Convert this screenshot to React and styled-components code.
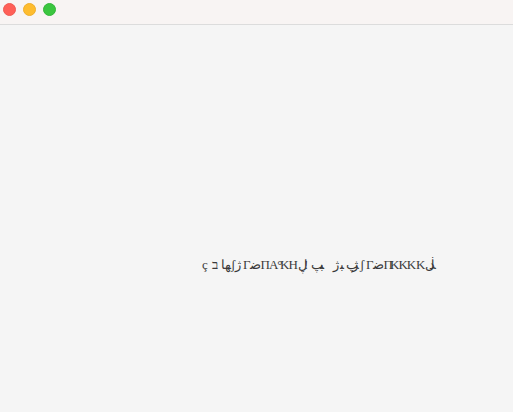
import React from 'react';
import styled, { createGlobalStyle } from 'styled-components';

const Global = createGlobalStyle`
  html, body { margin: 0; padding: 0; height: 100%; background: #f5f5f5; }
  #root { height: 100%; }
`;

const Window = styled.div`
  height: 412px;
  display: flex;
  flex-direction: column;
  background: #f5f5f5;
  overflow: hidden;
`;

const TitleBar = styled.div`
  height: 25px;
  display: flex;
  align-items: center;
  gap: 7px;
  padding: 0 8px 6px 3px;
  box-sizing: border-box;
  background: #f8f4f3;
  border-bottom: 1px solid #dcdcdc;
  flex: none;
`;

const Dot = styled.span`
  width: 13px;
  height: 13px;
  box-sizing: border-box;
  border-radius: 50%;
  background: ${p => p.$color};
  border: 1px solid ${p => p.$edge};
`;

const Body = styled.div`
  flex: 1;
  padding: 232px 0 0 202px;
`;

const Garbled = styled.div`
  display: flex;
  font-family: "Liberation Serif", "DejaVu Serif", serif;
  font-size: 13px;
  line-height: 16px;
  color: #3a3a3a;
  white-space: pre;
  letter-spacing: -1px;
`;

const Word = styled.span`
  display: block;
  flex: none;
  width: ${p => p.$width}px;
  unicode-bidi: isolate;
`;

const words = [
  ['ç', 10],
  ['ב', 9],
  ['ﻬﺎ', 10],
  ['ʃ', 4],
  ['ژ', 8],
  ['ΓﺿΠA°', 37],
  ['KH', 18],
  ['ڸ', 6],
  ['!', 7],
  ['ﭗ', 9],
  ['ﺒ', 13],
  ['ژ', 7],
  ['ﺒ', 6],
  ['ﭗ', 6],
  ['ژ', 8],
  ['ʃ', 6],
  ['ΓﺿΠ', 24],
  ['KKK', 26],
  ['K', 9],
  ['ڶ', 4],
  ['ﺪ', 5],
];

const App = () => (
  <>
    <Global />
    <Window>
      <TitleBar>
        <Dot $color="#ff5f57" $edge="#ee5a52" />
        <Dot $color="#febc2e" $edge="#eeae2a" />
        <Dot $color="#3bc63f" $edge="#35b53a" />
      </TitleBar>
      <Body>
        <Garbled>
          {words.map(([text, width], index) => (
            <Word key={index} $width={width}>{text}</Word>
          ))}
        </Garbled>
      </Body>
    </Window>
  </>
);

export default App;
